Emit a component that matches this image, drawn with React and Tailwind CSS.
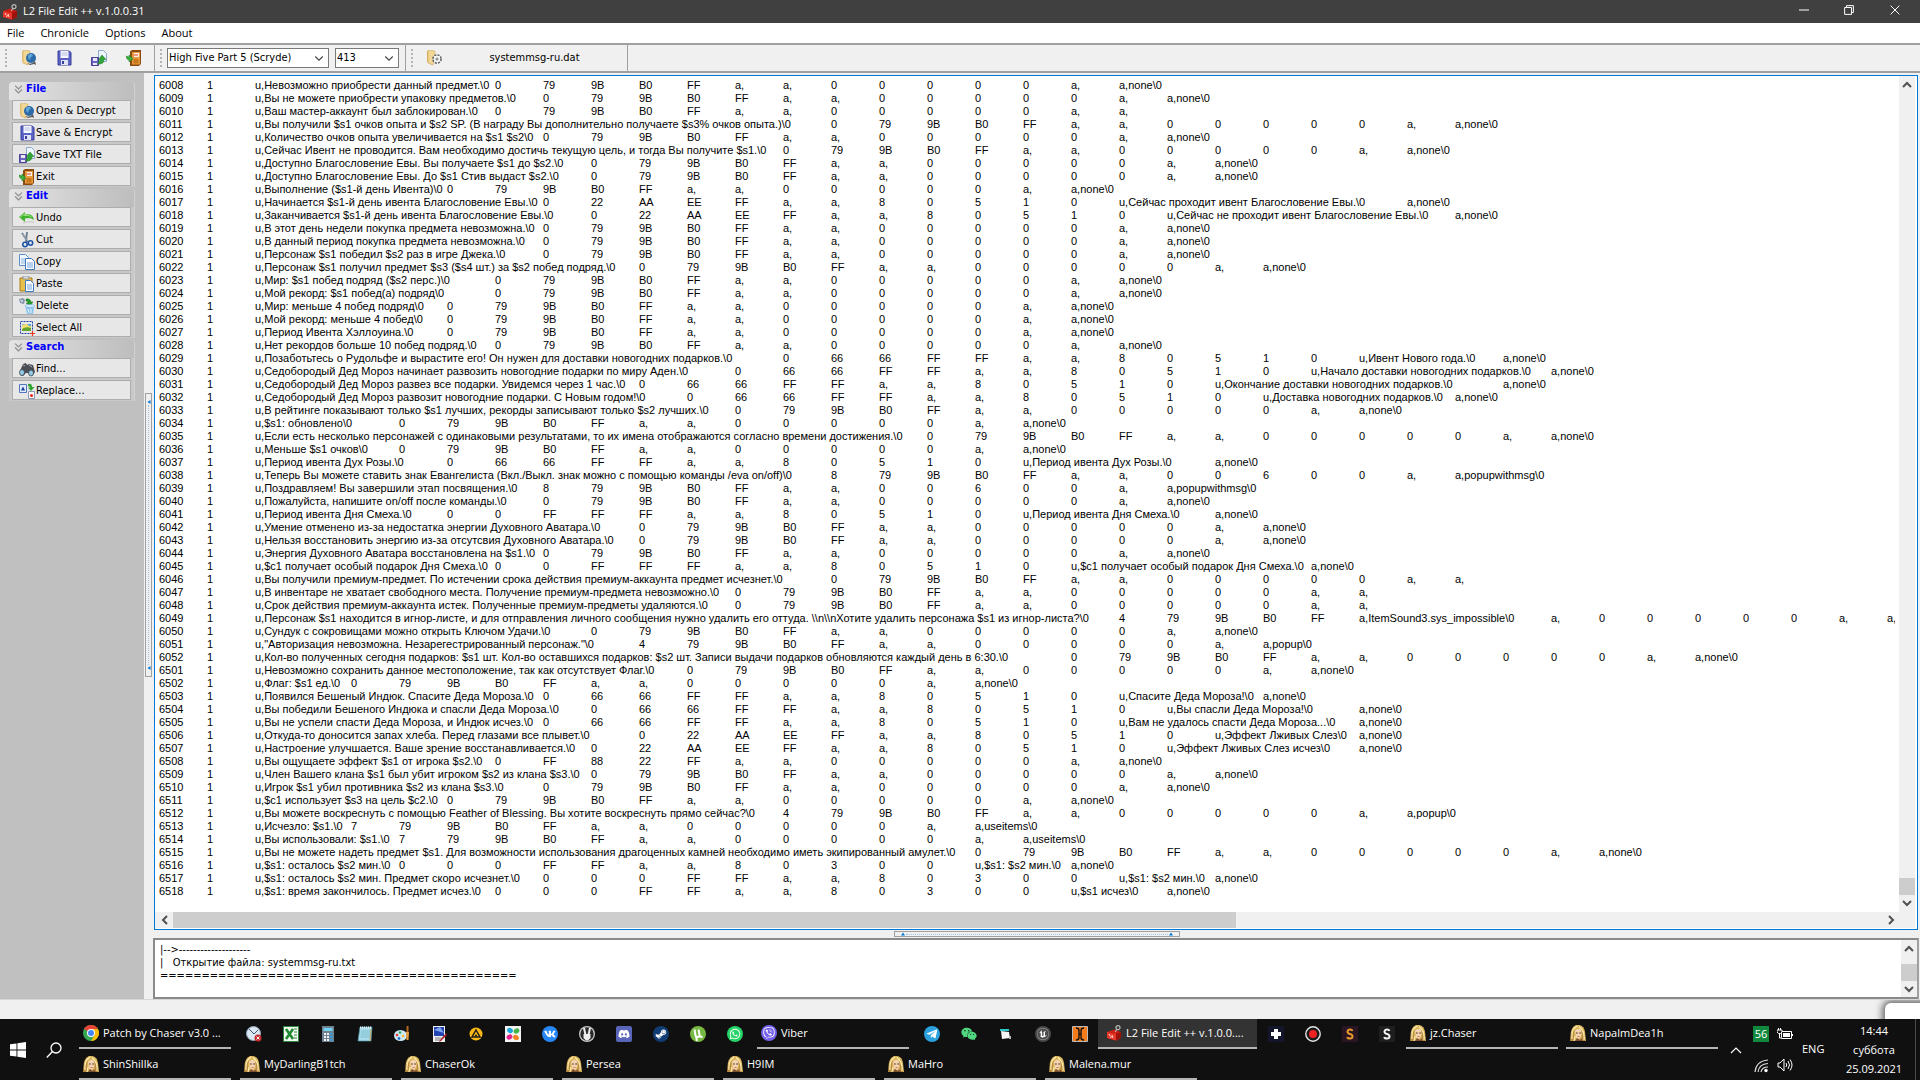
import { useMemo } from 'react'
import { FaDiscord, FaSteamSymbol, FaTelegramPlane, FaViber, FaVk, FaWeixin, FaWhatsapp } from 'react-icons/fa'
import { SiUnrealengine } from 'react-icons/si'
import clsx from 'clsx'

const TAB = 48
const EDITOR_FONT = '11px "Liberation Sans"'

// Common tail of a system message: colour, sounds and window flags
const D = '79|9B|B0|FF|a,|a,|0|0|0|0|0|a,'

/** Fields are split by "|"; a leading "^n:" pins a field to the n-th tab stop */
const ROWS = String.raw`
6008|1|u,Невозможно приобрести данный предмет.\0|^7:0|${D}|a,none\0
6009|1|u,Вы не можете приобрести упаковку предметов.\0|^8:0|${D}|a,none\0
6010|1|u,Ваш мастер-аккаунт был заблокирован.\0|^7:0|${D}|a,
6011|1|u,Вы получили $s1 очков опыта и $s2 SP. (В награду Вы дополнительно получаете $s3% очков опыта.)\0|^14:0|${D}|a,none\0
6012|1|u,Количество очков опыта увеличивается на $s1 $s2\0|^8:0|${D}|a,none\0
6013|1|u,Сейчас Ивент не проводится. Вам необходимо достичь текущую цель, и тогда Вы получите $s1.\0|^13:0|${D}|a,none\0
6014|1|u,Доступно Благословение Евы. Вы получаете $s1 до $s2.\0|^9:0|${D}|a,none\0
6015|1|u,Доступно Благословение Евы. До $s1 Стив выдаст $s2.\0|^9:0|${D}|a,none\0
6016|1|u,Выполнение ($s1-й день Ивента)\0|^6:0|${D}|a,none\0
6017|1|u,Начинается $s1-й день ивента Благословение Евы.\0|^8:0|22|AA|EE|FF|a,|a,|8|0|5|1|0|u,Сейчас проходит ивент Благословение Евы.\0|^26:a,none\0
6018|1|u,Заканчивается $s1-й день ивента Благословение Евы.\0|^9:0|22|AA|EE|FF|a,|a,|8|0|5|1|0|u,Сейчас не проходит ивент Благословение Евы.\0|^27:a,none\0
6019|1|u,В этот день недели покупка предмета невозможна.\0|^8:0|${D}|a,none\0
6020|1|u,В данный период покупка предмета невозможна.\0|^8:0|${D}|a,none\0
6021|1|u,Персонаж $s1 победил $s2 раз в игре Джека.\0|^8:0|${D}|a,none\0
6022|1|u,Персонаж $s1 получил предмет $s3 ($s4 шт.) за $s2 побед подряд.\0|^10:0|${D}|a,none\0
6023|1|u,Мир: $s1 побед подряд ($s2 перс.)\0|^7:0|${D}|a,none\0
6024|1|u,Мой рекорд: $s1 побед(а) подряд\0|^7:0|${D}|a,none\0
6025|1|u,Мир: меньше 4 побед подряд\0|^6:0|${D}|a,none\0
6026|1|u,Мой рекорд: меньше 4 побед\0|^6:0|${D}|a,none\0
6027|1|u,Период Ивента Хэллоуина.\0|^6:0|${D}|a,none\0
6028|1|u,Нет рекордов больше 10 побед подряд.\0|^7:0|${D}|a,none\0
6029|1|u,Позаботьтесь о Рудольфе и вырастите его! Он нужен для доставки новогодних подарков.\0|^13:0|66|66|FF|FF|a,|a,|8|0|5|1|0|u,Ивент Нового года.\0|^28:a,none\0
6030|1|u,Седобородый Дед Мороз начинает развозить новогодние подарки по миру Аден.\0|^12:0|66|66|FF|FF|a,|a,|8|0|5|1|0|u,Начало доставки новогодних подарков.\0|^29:a,none\0
6031|1|u,Седобородый Дед Мороз развез все подарки. Увидемся через 1 час.\0|^10:0|66|66|FF|FF|a,|a,|8|0|5|1|0|u,Окончание доставки новогодних подарков.\0|^28:a,none\0
6032|1|u,Седобородый Дед Мороз развозит новогодние подарки. С Новым годом!\0|^11:0|66|66|FF|FF|a,|a,|8|0|5|1|0|u,Доставка новогодних подарков.\0|^27:a,none\0
6033|1|u,В рейтинге показывают только $s1 лучших, рекорды записывают только $s2 лучших.\0|^12:0|${D}|a,none\0
6034|1|u,$s1: обновлено\0|^5:0|${D}|a,none\0
6035|1|u,Если есть несколько персонажей с одинаковыми результатами, то их имена отображаются согласно времени достижения.\0|^16:0|${D}|a,none\0
6036|1|u,Меньше $s1 очков\0|^5:0|${D}|a,none\0
6037|1|u,Период ивента Дух Розы.\0|^6:0|66|66|FF|FF|a,|a,|8|0|5|1|0|u,Период ивента Дух Розы.\0|^22:a,none\0
6038|1|u,Теперь Вы можете ставить знак Евангелиста (Вкл./Выкл. знак можно с помощью команды /eva on/off)\0|^14:8|79|9B|B0|FF|a,|a,|0|0|6|0|0|a,|a,popupwithmsg\0
6039|1|u,Поздравляем! Вы завершили этап посвящения.\0|^8:8|79|9B|B0|FF|a,|a,|0|0|6|0|0|a,|a,popupwithmsg\0
6040|1|u,Пожалуйста, напишите on/off после команды.\0|^8:0|${D}|a,none\0
6041|1|u,Период ивента Дня Смеха.\0|^6:0|0|FF|FF|FF|a,|a,|8|0|5|1|0|u,Период ивента Дня Смеха.\0|^22:a,none\0
6042|1|u,Умение отменено из-за недостатка энергии Духовного Аватара.\0|^10:0|${D}|a,none\0
6043|1|u,Нельзя восстановить энергию из-за отсутсвия Духовного Аватара.\0|^10:0|${D}|a,none\0
6044|1|u,Энергия Духовного Аватара восстановлена на $s1.\0|^8:0|${D}|a,none\0
6045|1|u,$c1 получает особый подарок Дня Смеха.\0|^7:0|0|FF|FF|FF|a,|a,|8|0|5|1|0|u,$c1 получает особый подарок Дня Смеха.\0|^24:a,none\0
6046|1|u,Вы получили премиум-предмет. По истечении срока действия премиум-аккаунта предмет исчезнет.\0|^14:0|${D}|a,
6047|1|u,В инвентаре не хватает свободного места. Получение премиум-предмета невозможно.\0|^12:0|${D}|a,
6048|1|u,Срок действия премиум-аккаунта истек. Полученные премиум-предметы удаляются.\0|^12:0|${D}|a,
6049|1|u,Персонаж $s1 находится в игнор-листе, и для отправления личного сообщения нужно удалить его оттуда. \\n\\nХотите удалить персонажа $s1 из игнор-листа?\0|^20:4|79|9B|B0|FF|a,ItemSound3.sys_impossible\0|^29:a,|0|0|0|0|0|a,|a,none\0
6050|1|u,Сундук с сокровищами можно открыть Ключом Удачи.\0|^9:0|${D}|a,none\0
6051|1|u,"Авторизация невозможна. Незарегестрированный персонаж."\0|^10:4|${D}|a,popup\0
6052|1|u,Кол-во полученных сегодня подарков: $s1 шт. Кол-во оставшихся подарков: $s2 шт. Записи выдачи подарков обновляются каждый день в 6:30.\0|^19:0|${D}|a,none\0
6501|1|u,Невозможно сохранить данное местоположение, так как отсутствует Флаг.\0|^11:0|${D}|a,none\0
6502|1|u,Флаг: $s1 ед.\0|^4:0|${D}|a,none\0
6503|1|u,Появился Бешеный Индюк. Спасите Деда Мороза.\0|^8:0|66|66|FF|FF|a,|a,|8|0|5|1|0|u,Спасите Деда Мороза!\0|^23:a,none\0
6504|1|u,Вы победили Бешеного Индюка и спасли Деда Мороза.\0|^9:0|66|66|FF|FF|a,|a,|8|0|5|1|0|u,Вы спасли Деда Мороза!\0|^25:a,none\0
6505|1|u,Вы не успели спасти Деда Мороза, и Индюк исчез.\0|^8:0|66|66|FF|FF|a,|a,|8|0|5|1|0|u,Вам не удалось спасти Деда Мороза...\0|^25:a,none\0
6506|1|u,Откуда-то доносится запах хлеба. Перед глазами все плывет.\0|^10:0|22|AA|EE|FF|a,|a,|8|0|5|1|0|u,Эффект Лживых Слез\0|^25:a,none\0
6507|1|u,Настроение улучшается. Ваше зрение восстанавливается.\0|^9:0|22|AA|EE|FF|a,|a,|8|0|5|1|0|u,Эффект Лживых Слез исчез\0|^25:a,none\0
6508|1|u,Вы ощущаете эффект $s1 от игрока $s2.\0|^7:0|FF|88|22|FF|a,|a,|0|0|0|0|0|a,|a,none\0
6509|1|u,Член Вашего клана $s1 был убит игроком $s2 из клана $s3.\0|^9:0|${D}|a,none\0
6510|1|u,Игрок $s1 убил противника $s2 из клана $s3.\0|^8:0|${D}|a,none\0
6511|1|u,$c1 использует $s3 на цель $c2.\0|^6:0|${D}|a,none\0
6512|1|u,Вы можете воскреснуть с помощью Feather of Blessing. Вы хотите воскреснуть прямо сейчас?\0|^13:4|${D}|a,popup\0
6513|1|u,Исчезло: $s1.\0|^4:7|${D}|a,useitems\0
6514|1|u,Вы использовали: $s1.\0|^5:7|${D}|a,useitems\0
6515|1|u,Вы не можете надеть предмет $s1. Для возможности использования драгоценных камней необходимо иметь экипированный амулет.\0|^17:0|${D}|a,none\0
6516|1|u,$s1: осталось $s2 мин.\0|^5:0|0|0|FF|FF|a,|a,|8|0|3|0|0|u,$s1: $s2 мин.\0|^19:a,none\0
6517|1|u,$s1: осталось $s2 мин. Предмет скоро исчезнет.\0|^8:0|0|0|FF|FF|a,|a,|8|0|3|0|0|u,$s1: $s2 мин.\0|^22:a,none\0
6518|1|u,$s1: время закончилось. Предмет исчез.\0|^7:0|0|0|FF|FF|a,|a,|8|0|3|0|0|u,$s1 исчез\0|^21:a,none\0
`

const LOG = ['|-->--------------------', '|   Открытие файла: systemmsg-ru.txt', '='.repeat(43)].join('\n')

/** Joins the fields with as many tabs as each one needs to reach its tab stop */
function layoutLine(line, measure) {
  // the browser skips a stop that is closer than half a space
  const minTab = measure(' ') / 2
  let out = ''
  let col = 0
  let end = 0
  line.split('|').forEach((raw, i) => {
    const pin = raw.match(/^\^(\d+):/)
    const text = pin ? raw.slice(pin[0].length) : raw
    if (i > 0) {
      const next = Math.floor((end + minTab) / TAB) + 1
      const target = pin ? Math.max(Number(pin[1]), next) : next
      out += '\t'.repeat(target - next + 1)
      col = target
    }
    out += text
    end = col * TAB + measure(text)
  })
  return out
}

/* ---------- icons ---------- */

function Svg({ className = 'size-4', children, ...rest }) {
  return (
    <svg viewBox="0 0 16 16" className={clsx('shrink-0', className)} aria-hidden="true" {...rest}>
      {children}
    </svg>
  )
}

const OpenIcon = () => (
  <Svg>
    <path d="M1 1l6 1v13l-5-2-1-2z" fill="#e8c77c" />
    <path d="M2 0l7 1v3L7 15 2 13z" fill="#f2d896" stroke="#c79b4e" strokeWidth=".5" />
    <circle cx="10" cy="8" r="5" fill="#2a6aa8" />
    <path d="M7 5q2-2 4-1l1 2-2 1-1 3-2-2z" fill="#5fa4d4" />
    <path d="M6 13q5 2 8-2l1 4-2-1-4 1z" fill="#555" />
  </Svg>
)

const SaveIcon = () => (
  <Svg>
    <path d="M2 1h11l2 1.500V15H2z" fill="#5a62c4" stroke="#393f9c" />
    <path d="M4.500 1h8v7h-8z" fill="#f6f8ff" />
    <path d="M5.500 3h6M5.500 5h6" stroke="#b5bce0" />
    <path d="M5 10h7v5H5z" fill="#dfe3f5" />
    <path d="M6 11h2v3H6z" fill="#393f9c" />
  </Svg>
)

const SaveTxtIcon = () => (
  <Svg>
    <path d="M7.500.5h5l3 3v8h-8z" fill="#eef5fd" stroke="#8aa9cf" />
    <path d="M.5 7.500h7v8h-7z" fill="#6a63c0" stroke="#4a4398" />
    <path d="M2 8h4v3H2zM2 13h4v2H2z" fill="#e9e9fa" />
    <path d="M7 12.500q1.500 0 2-3H7.500L11 5l4 4.500h-2q0 5-6 4.500z" fill="#2fa636" stroke="#17701d" strokeWidth=".5" />
  </Svg>
)

const ExitIcon = () => (
  <Svg>
    <path d="M4 1.500L6 0h9v14l-2 2H4z" fill="#8a4a12" />
    <path d="M6 2h8v12.500H6z" fill="#e59a3c" />
    <path d="M8 3h5v4H8z" fill="#fff0e8" />
    <path d="M9 4v2M11 4v2" stroke="#e03c28" />
    <path d="M7.500 9h5v4.500h-5z" fill="#c9771f" />
    <path d="M0 6l3 1V5l4 4-4 3v-2L1 9z" fill="#3cae3c" stroke="#1c7a22" strokeWidth=".5" />
  </Svg>
)

const UndoIcon = () => (
  <Svg>
    <path d="M0 7l6-5v2.500q8-1.500 9 5.500-4-3-9-1.500V12z" fill="#3fb22e" />
    <path d="M1.500 7l4-3v1.500q5-1 7 1.500" stroke="#9be37f" fill="none" />
    <path d="M4 13q6-2 11-.5" stroke="#cfcfcf" strokeWidth="1.500" fill="none" />
  </Svg>
)

const CutIcon = () => (
  <Svg>
    <path d="M3 1l6 9M8 0L7 10" stroke="#6b7b8c" strokeWidth="1.800" />
    <path d="M3.500 2L9 9" stroke="#cdd8e2" strokeWidth=".6" />
    <circle cx="6" cy="12.500" r="2.200" fill="none" stroke="#1f54a8" strokeWidth="1.600" />
    <circle cx="11.500" cy="11" r="2.200" fill="none" stroke="#1f54a8" strokeWidth="1.600" />
  </Svg>
)

const CopyIcon = () => (
  <Svg>
    <path d="M.5.5h6l3 3v8h-9z" fill="#f2f7fd" stroke="#5d8fc9" />
    <path d="M2 5h5M2 7h5M2 9h5" stroke="#8db4df" />
    <path d="M6.500 4.500h6l3 3v8h-9z" fill="#fff" stroke="#3f78bd" />
    <path d="M8 9h6M8 11h6M8 13h6" stroke="#6fa2db" />
  </Svg>
)

const PasteIcon = () => (
  <Svg>
    <path d="M1 2h12v13H1z" fill="#e8c04e" stroke="#a77c1a" />
    <path d="M4 0h6v3H4z" fill="#d7dbe0" stroke="#7e858d" strokeWidth=".7" />
    <path d="M6.500 4.500h5l3 3v8h-8z" fill="#fff" stroke="#3f78bd" />
    <path d="M8 9h5M8 11h5M8 13h5" stroke="#6fa2db" />
  </Svg>
)

const DeleteIcon = () => (
  <Svg>
    <path d="M0 1l4-1 2 2-1 4-4-1z" fill="#8593ab" />
    <path d="M1 2l3 1-2 1" stroke="#d4dce8" fill="none" />
    <path d="M7 1q4-1 5 3h2l-3 4-4-3h2Q9 3 7 3z" fill="#249a2a" stroke="#12651a" strokeWidth=".4" />
    <path d="M6 7.500h9.500L14 16H8z" fill="#8ec6f0" />
    <ellipse cx="10.800" cy="8" rx="4.800" ry="1.500" fill="#d6ecfb" stroke="#6ba9dc" strokeWidth=".6" />
    <path d="M9 11l1 4M12 11v4" stroke="#fff" strokeWidth=".8" />
  </Svg>
)

const SelectAllIcon = () => (
  <Svg>
    <path d="M1.500 1.500h12v12h-12z" fill="none" stroke="#1d3fa6" strokeDasharray="2 1" />
    <path d="M3 4h9v7H3z" fill="#57a8e4" />
    <path d="M3 8q4-3 9-1v4H3z" fill="#62a62e" />
    <path d="M3 5q5-2 6 0t3 1v2q-5-2-9 1z" fill="#f2df70" />
    <path d="M11 13.500h5M13.500 11v5" stroke="#f0361c" strokeWidth="1.200" />
  </Svg>
)

const FindIcon = () => (
  <Svg>
    <path d="M1 10L4 3l3-1 1 2 2-1 4 1 2 7-3 4-3-3H7l-3 3-3-1z" fill="#4b4f55" />
    <path d="M4 4l2 1M10 4l3 2" stroke="#aab0b8" />
    <ellipse cx="3" cy="11.500" rx="2.500" ry="3" fill="#8fcbe8" stroke="#333" strokeWidth=".7" />
    <ellipse cx="12" cy="12" rx="2.500" ry="3" fill="#8fcbe8" stroke="#333" strokeWidth=".7" />
  </Svg>
)

const ReplaceIcon = () => (
  <Svg>
    <path d="M.5 1.500h7v8h-7z" fill="#dfeafb" stroke="#5476c0" />
    <path d="M2 7.500l2-4 2 4z" fill="#1b3c9e" />
    <path d="M9 1q4-1 4 3h2.500L12 8 9 4.500h2Q11 3 9 3z" fill="#2ca52f" />
    <path d="M9.500 8.500h6v7h-6z" fill="#fff" stroke="#8a97b8" />
    <circle cx="12.500" cy="12.500" r="1.600" fill="#e22d1c" />
  </Svg>
)

const GearFolderIcon = () => (
  <Svg>
    <path d="M1 1l6 1v13l-5-2-1-2z" fill="#d9b25f" />
    <path d="M2 0l7 1v3L7 15 2 13z" fill="#f2d896" stroke="#c79b4e" strokeWidth=".5" />
    <circle cx="11" cy="9" r="4" fill="#f2f2f2" stroke="#666" strokeDasharray="2 1.140" strokeWidth="1.800" />
    <circle cx="11" cy="9" r="3.200" fill="#f5f5f5" />
    <circle cx="11" cy="9" r="1.500" fill="#8f8f8f" />
  </Svg>
)

const AppIcon = () => (
  <Svg>
    <path d="M1 7l7-2.500L15 7v6l-5 2.500L1 13z" fill="#c81e14" />
    <path d="M1 7l9 2v6.500L1 13z" fill="#e6382a" />
    <path d="M10 9l5-2v6l-5 2.500z" fill="#9c120c" />
    <path d="M3 9l1 2M6 10l1 3M4 12.500l2-1" stroke="#ffd5cc" />
    <circle cx="12" cy="2.700" r="2" fill="none" stroke="#b9b9b9" strokeWidth="1.200" />
    <path d="M11 4.500L9 7" stroke="#b9b9b9" strokeWidth="1.200" />
  </Svg>
)

const Portrait = () => (
  <Svg>
    <path d="M1 16Q-1 3 6 0q8-1 9 7l1 9z" fill="#dcb55c" />
    <path d="M0 16Q1 6 5 3l-1 6 1 7zM11 3q4 3 4 13h-3z" fill="#b98a3c" />
    <path d="M5 6q3-4 6-1l.5 5-2.500 4-3-1.500z" fill="#f3d3b0" />
    <path d="M2 14Q1 5 7 1M14 15Q15 6 9 1.500M4 16l1-5" stroke="#fff0b4" fill="none" strokeWidth="1.200" />
    <path d="M6 8h1.800M9.200 8H11" stroke="#5c3a2c" strokeWidth="1.200" />
    <path d="M7.500 11.500h2" stroke="#b85f4c" strokeWidth=".8" />
    <path d="M5 16l2-3 3 2 1-2 2 3z" fill="#7d5234" />
  </Svg>
)

const ChromeIcon = () => (
  <Svg>
    <circle cx="8" cy="8" r="8" fill="#34a853" />
    <path d="M8 8L1.070 4A8 8 0 0 1 14.930 4z" fill="#ea4335" />
    <path d="M8 8V4h6.930A8 8 0 0 1 8 16l3.500-6z" fill="#fbbc05" />
    <circle cx="8" cy="8" r="4" fill="#fff" />
    <circle cx="8" cy="8" r="3" fill="#4285f4" />
  </Svg>
)

const ClockIcon = () => (
  <Svg>
    <circle cx="7.500" cy="7.500" r="7" fill="#dbe8f4" stroke="#8fa3b8" />
    <path d="M3 3l5 5 4-4" stroke="#44566b" fill="none" />
    <circle cx="12" cy="12" r="3.500" fill="#c62828" />
    <path d="M10.500 10.500l3 3M13.500 10.500l-3 3" stroke="#fff" />
  </Svg>
)

const ExcelIcon = () => (
  <Svg>
    <path d="M.5.5h15v15H.5z" fill="#f3f8f2" stroke="#2d8a3c" />
    <path d="M11 3h3M11 6h3M11 9h3M11 12h3" stroke="#2d8a3c" />
    <path d="M3 3l7 10M10 3L3 13" stroke="#1f8a30" strokeWidth="2.600" />
  </Svg>
)

const CalcIcon = () => (
  <Svg>
    <path d="M2 0h12v16H2z" fill="#70808f" />
    <path d="M3.500 2h9v3h-9z" fill="#6fd3f2" />
    <path d="M4 8h2M7 8h2M4 11h2M7 11h2M4 14h2M7 14h2" stroke="#f2f5f7" strokeWidth="2" />
    <path d="M10 8h2.500M10 11h2.500M10 14h2.500" stroke="#2f9fe0" strokeWidth="2" />
  </Svg>
)

const NotepadIcon = () => (
  <Svg>
    <path d="M3 1h12l-1 14H1z" fill="#a9dcea" stroke="#4c91a8" strokeWidth=".7" />
    <path d="M4 5h9M4 7h9M3.500 9H13M3.500 11H13" stroke="#6fb3c7" strokeWidth=".7" />
    <path d="M3 1.500h12" stroke="#e8eef0" strokeWidth="2" strokeDasharray="1 1" />
    <path d="M14 3l-1 12" stroke="#c9a45c" />
  </Svg>
)

const PaintIcon = () => (
  <Svg>
    <ellipse cx="6.500" cy="9.500" rx="6.500" ry="5.500" fill="#cfe6f5" />
    <circle cx="3" cy="9" r="1.300" fill="#e33" />
    <circle cx="6" cy="6.500" r="1.300" fill="#2a5" />
    <circle cx="5" cy="12.500" r="1.400" fill="#27c" />
    <circle cx="9" cy="10" r="1.300" fill="#fb3" />
    <path d="M13.500 0v6" stroke="#b5651d" strokeWidth="2" />
    <path d="M12 6h3l-.5 8h-2z" fill="#e79b3c" />
  </Svg>
)

const EditorIcon = () => (
  <Svg>
    <path d="M2 0h12v16H2z" fill="#f2f2f2" />
    <path d="M3 1h10v9H3z" fill="#2343b0" />
    <path d="M3 4l6-3 4 6" fill="#7fa6f5" />
    <path d="M4 12h6M4 14h5" stroke="#777" />
    <path d="M15 7l-6 7-1 2 2-1 6-6z" fill="#a81f28" />
  </Svg>
)

const YellowIcon = () => (
  <Svg>
    <circle cx="8" cy="8" r="6.500" fill="#f9b916" />
    <path d="M8 4l4 7H4z" fill="none" stroke="#1c1c1c" strokeWidth="1.500" />
    <path d="M8 8l1.500 2.500h-3z" fill="#1c1c1c" />
  </Svg>
)

const FlowerIcon = () => (
  <Svg>
    <path d="M0 0h16v16H0z" fill="#f4f4f4" />
    <ellipse cx="5" cy="4.500" rx="3" ry="2.500" fill="#18a6dd" transform="rotate(35 5 4.500)" />
    <ellipse cx="11.500" cy="5" rx="3" ry="2.500" fill="#44b649" transform="rotate(-35 11.500 5)" />
    <ellipse cx="4.500" cy="11" rx="3" ry="2.500" fill="#e5218a" transform="rotate(-35 4.500 11)" />
    <ellipse cx="11" cy="11.500" rx="3" ry="2.500" fill="#f58220" transform="rotate(35 11 11.500)" />
  </Svg>
)

const PeaceIcon = () => (
  <Svg>
    <circle cx="8" cy="8" r="8" fill="#c9c9c9" />
    <circle cx="8" cy="8" r="6.700" fill="#2b2b2b" />
    <path d="M5 2l1.500 7M11 2L9.500 9" stroke="#eee" strokeWidth="2" />
    <path d="M4.500 8h7v4L9 14.500H7L4.500 12z" fill="#eee" />
  </Svg>
)

const Round = ({ bg, fg = 'text-white', Glyph, square }) => (
  <span className={clsx('grid size-4 place-items-center', square ? 'rounded-xs' : 'rounded-full', bg, fg)}>
    <Glyph className="size-3" />
  </span>
)

const TorrentIcon = () => (
  <Svg>
    <circle cx="8" cy="8" r="8" fill="#77b843" />
    <path d="M4.500 3.500l1 6q.5 2 2.500 1.500t1.500-2.500l-1-5M9.500 9q1 2.500 3 1.500M6 10l1 5" stroke="#fff" strokeWidth="2" fill="none" />
  </Svg>
)

const VbIcon = () => (
  <Svg>
    <path d="M2 3h9v2H2z" fill="#27c9c9" />
    <path d="M3 5l8 1 1 6-8 1z" fill="#f6f6f6" />
    <path d="M11 10h2v3h-2z" fill="#bdbdbd" />
  </Svg>
)

const OrangeIcon = () => (
  <Svg>
    <path d="M.5.5h15v15H.5z" fill="#f27b1b" stroke="#b9b9b9" />
    <path d="M4 2q3 0 3 2.500v7Q7 14 4 14M12 2Q9 2 9 4.500v7q0 2.500 3 2.500M7 8h2" stroke="#17120d" strokeWidth="1.400" fill="none" />
  </Svg>
)

const CrossIcon = () => (
  <Svg>
    <path d="M0 0h16v16H0z" fill="#14162c" />
    <path d="M6 3h4v3h3v4h-3v3H6v-3H3V6h3z" fill="#fff" />
  </Svg>
)

const RecordIcon = () => (
  <Svg>
    <circle cx="8" cy="8" r="7.200" fill="#1a1a1a" stroke="#e6e6e6" strokeWidth="1.400" />
    <circle cx="8" cy="8" r="4" fill="#ee2222" />
  </Svg>
)

function CoinIcon({ dark }) {
  return (
    <Svg>
      <path d="M0 0h16v16H0z" fill={dark ? '#1e1e1e' : '#2a1622'} />
      <path
        d="M10.500 5Q10 3.500 8 3.500T5.500 5.500Q5.500 7.500 8 8t2.500 2.500q0 2-2.500 2T5.300 11"
        stroke={dark ? '#f2f2f2' : '#e9982c'}
        strokeWidth="2"
        fill="none"
      />
    </Svg>
  )
}

/* ---------- small parts ---------- */

const ARROWS = {
  up: 'M4 10l4-4 4 4',
  down: 'M4 6l4 4 4-4',
  left: 'M10 4L6 8l4 4',
  right: 'M6 4l4 4-4 4',
}

function ScrollButton({ dir }) {
  return (
    <button type="button" aria-label={`Scroll ${dir}`} className="grid size-4 shrink-0 place-items-center">
      <Svg>
        <path d={ARROWS[dir]} fill="none" stroke="#505050" strokeWidth="2" />
      </Svg>
    </button>
  )
}

const Grip = () => (
  <span className="flex flex-col gap-[2px] px-[5px]" aria-hidden="true">
    {[0, 1, 2, 3, 4].map((i) => (
      <span key={i} className="size-[2px] bg-[#b4b4b4]" />
    ))}
  </span>
)

function Combo({ label, value, className }) {
  return (
    <div className={clsx('relative', className)}>
      <select
        aria-label={label}
        defaultValue={value}
        className="block h-5 w-full appearance-none border border-[#7a7a7a] bg-white pl-px text-[11px] outline-none"
      >
        <option>{value}</option>
      </select>
      <Svg className="pointer-events-none absolute top-1 right-1 size-3">
        <path d="M3 6l5 5 5-5" fill="none" stroke="#444" strokeWidth="1.500" />
      </Svg>
    </div>
  )
}

const GROUPS = [
  {
    title: 'File',
    items: [
      ['Open & Decrypt', OpenIcon],
      ['Save & Encrypt', SaveIcon],
      ['Save TXT File', SaveTxtIcon],
      ['Exit', ExitIcon],
    ],
  },
  {
    title: 'Edit',
    items: [
      ['Undo', UndoIcon],
      ['Cut', CutIcon],
      ['Copy', CopyIcon],
      ['Paste', PasteIcon],
      ['Delete', DeleteIcon],
      ['Select All', SelectAllIcon],
    ],
  },
  {
    title: 'Search',
    items: [
      ['Find...', FindIcon],
      ['Replace...', ReplaceIcon],
    ],
  },
]

function Sidebar() {
  return (
    <aside className="flex w-36 shrink-0 flex-col gap-[2px] bg-[#c0c0c0] px-[9px] pt-[9px]">
      {GROUPS.map((g) => (
        <section key={g.title} className="rounded-t-sm border-r border-[#d2d2d2] bg-[#c8c8c8] pb-px">
          <h2 className="flex h-[18px] items-center gap-[3px] rounded-t-sm bg-linear-to-r from-[#e4e4e4] to-[#bdbdbd] pb-[3px] pl-[5px] text-[11px] font-bold text-[#0000ff]">
            <Svg className="size-[9px]">
              <path d="M2 1l6 6 6-6M2 8l6 6 6-6" fill="none" stroke="#8c8c8c" strokeWidth="2" />
            </Svg>
            {g.title}
          </h2>
          <div className="flex flex-col gap-[2px] px-[3px]">
            {g.items.map(([label, Icon]) => (
              <button
                key={label}
                type="button"
                className="flex h-5 items-center gap-px border border-[#adadad] bg-[#e7e7e7] pt-[2px] pl-[6px] text-[11px] whitespace-nowrap"
              >
                <Icon />
                {label}
              </button>
            ))}
          </div>
        </section>
      ))}
    </aside>
  )
}

function Editor() {
  const text = useMemo(() => {
    const ctx = document.createElement('canvas').getContext('2d')
    ctx.font = EDITOR_FONT
    const measure = (s) => ctx.measureText(s).width
    return ROWS.trim()
      .split('\n')
      .map((line) => layoutLine(line, measure))
      .join('\n')
  }, [])

  return (
    <div className="mt-[2px] mr-[2px] ml-px flex min-h-0 flex-1 flex-col border border-[#0078d7] bg-white pr-[2px] pb-px">
      <div className="flex min-h-0 flex-1">
        <textarea
          aria-label="systemmsg-ru.dat"
          readOnly
          wrap="off"
          spellCheck={false}
          value={text}
          className="mr-1 min-w-0 flex-1 resize-none overflow-hidden pt-[3px] pl-1 font-['Liberation_Sans',sans-serif] text-[11px] leading-[13px] whitespace-pre outline-none [tab-size:48px]"
        />
        <div className="flex w-4 shrink-0 flex-col bg-[#f0f0f0] py-px">
          <ScrollButton dir="up" />
          <div className="flex-1" />
          <div className="h-[17px] bg-[#cdcdcd]" />
          <ScrollButton dir="down" />
        </div>
      </div>
      <div className="flex h-4 shrink-0 bg-[#f0f0f0] pr-4 pl-[2px]">
        <ScrollButton dir="left" />
        <div className="w-[61%] bg-[#cdcdcd]" />
        <div className="flex-1" />
        <ScrollButton dir="right" />
      </div>
    </div>
  )
}

function Log() {
  return (
    <div className="mr-px flex h-[61px] shrink-0 border-2 border-[#8a8a8a] border-r-[#a0a0a0] bg-white">
      <textarea
        aria-label="Log"
        readOnly
        value={LOG}
        className="min-w-0 flex-1 resize-none overflow-hidden pt-[3px] pl-[5px] text-[11px] leading-[13px] whitespace-pre outline-none"
      />
      <div className="flex w-4 shrink-0 flex-col bg-[#f0f0f0] pt-px">
        <ScrollButton dir="up" />
        <div className="flex-1" />
        <div className="h-[17px] bg-[#cdcdcd]" />
        <ScrollButton dir="down" />
      </div>
    </div>
  )
}

function TaskButton({ icon, label, active, className }) {
  return (
    <button
      type="button"
      className={clsx(
        'flex shrink-0 items-center gap-1 border-b-2 border-[#b5b5b5] pl-1 text-left whitespace-nowrap text-white',
        active && 'bg-[#333]',
        className
      )}
    >
      {icon}
      {label}
    </button>
  )
}

function Pins({ items }) {
  return items.map(([name, icon]) => (
    <button key={name} type="button" aria-label={name} className="grid w-[37px] shrink-0 place-items-center">
      {icon}
    </button>
  ))
}

const PINS_A = [
  ['Clock', <ClockIcon />],
  ['Excel', <ExcelIcon />],
  ['Calculator', <CalcIcon />],
  ['Notepad', <NotepadIcon />],
  ['Paint', <PaintIcon />],
  ['Editor', <EditorIcon />],
  ['AIMP', <YellowIcon />],
  ['Flower', <FlowerIcon />],
  ['VK', <Round bg="bg-[#2787f5]" Glyph={FaVk} />],
  ['Peace', <PeaceIcon />],
  ['Discord', <Round bg="bg-[#5865b8]" Glyph={FaDiscord} square />],
  ['Steam', <Round bg="bg-[#123d74]" Glyph={FaSteamSymbol} />],
  ['Torrent', <TorrentIcon />],
  ['WhatsApp', <Round bg="bg-[#25d366]" Glyph={FaWhatsapp} />],
]

const PINS_B = [
  ['Telegram', <Round bg="bg-[#2aa1de]" Glyph={FaTelegramPlane} />],
  ['WeChat', <FaWeixin className="size-4 text-[#4fd67f]" />],
  ['Basic', <VbIcon />],
  ['Unreal', <Round bg="bg-[#4a4a4a]" Glyph={SiUnrealengine} />],
  ['Hex', <OrangeIcon />],
]

const PINS_C = [
  ['Cross', <CrossIcon />],
  ['Record', <RecordIcon />],
  ['Coin', <CoinIcon />],
  ['Coin dark', <CoinIcon dark />],
]

const CLIENTS = ['ShinShillka', 'MyDarlingB1tch', 'ChaserOk', 'Persea', 'H9IM', 'MaHro', 'Malena.mur']

function Taskbar() {
  return (
    <footer className="flex h-[61px] shrink-0 bg-[#101010] text-[11px] text-white">
      <button type="button" aria-label="Start" className="grid w-9 place-items-center">
        <Svg>
          <path d="M0 2.300L6.500 1.400V7.600H0zM7.400 1.200L16 0v7.600H7.400zM0 8.400h6.500v6.200L0 13.700zM7.400 8.400H16V16l-8.600-1.200z" fill="#fff" />
        </Svg>
      </button>
      <button type="button" aria-label="Search" className="mr-[7px] grid w-9 place-items-center">
        <Svg>
          <circle cx="10" cy="6" r="5" fill="none" stroke="#fff" strokeWidth="1.300" />
          <path d="M6.500 9.500L.8 15.500" stroke="#fff" strokeWidth="1.300" />
        </Svg>
      </button>
      <div className="flex min-w-0 flex-1 flex-col gap-px">
        <nav className="flex h-[30px] shrink-0">
          <TaskButton icon={<ChromeIcon />} label="Patch by Chaser v3.0 ..." className="mr-1 w-[152px]" />
          <Pins items={PINS_A} />
          <TaskButton icon={<Round bg="bg-[#7360e8]" Glyph={FaViber} />} label="Viber" className="mx-1 w-[152px]" />
          <Pins items={PINS_B} />
          <TaskButton icon={<AppIcon />} label="L2 File Edit ++ v.1.0.0...." active className="w-[159px] pl-2" />
          <Pins items={PINS_C} />
          <TaskButton icon={<Portrait />} label="jz.Chaser" className="mr-2 ml-px w-[152px]" />
          <TaskButton icon={<Portrait />} label="NapalmDea1h" className="w-[152px]" />
        </nav>
        <nav className="flex h-[30px] shrink-0 gap-[9px]">
          {CLIENTS.map((name) => (
            <TaskButton key={name} icon={<Portrait />} label={name} className="w-[152px]" />
          ))}
        </nav>
      </div>
      <div className="flex shrink-0 items-center">
        <button type="button" aria-label="Hidden icons" className="mr-[9px]">
          <Svg>
            <path d="M3 11l5-5 5 5" fill="none" stroke="#fff" strokeWidth="1.200" />
          </Svg>
        </button>
        <div className="grid grid-cols-2 gap-x-2 gap-y-[15px]">
          <span className="grid size-4 place-items-center bg-[#10893e]">56</span>
          <Svg>
            <path d="M4.500 5.500h10v7h-10z" fill="none" stroke="#fff" />
            <path d="M6 7h7v4H6zM15 8h1v2h-1z" fill="#fff" />
            <path d="M0 4h5v2L3.500 7.500h-2L0 6zM1.500 2v2M3.500 2v2M2.500 7v5h2" fill="#101010" stroke="#fff" />
          </Svg>
          <Svg>
            <path d="M2 15Q3 4 15 3M5 15Q6 7 15 6.500M8 15q1-5 7-5" fill="none" stroke="#ddd" strokeWidth="1.200" />
            <circle cx="13" cy="13.500" r="1.700" fill="#fff" />
          </Svg>
          <Svg>
            <path d="M1 6h2l4-4v12l-4-4H1z" fill="none" stroke="#fff" />
            <path d="M9 6q1.500 2 0 4M11 4q3 4 0 8M13 2.500q4 5.500 0 11" fill="none" stroke="#fff" />
          </Svg>
        </div>
        <span className="ml-[9px] w-[36px]">ENG</span>
        <div className="w-[72px] text-center leading-[19px]">
          <div>14:44</div>
          <div>суббота</div>
          <div>25.09.2021</div>
        </div>
        <div className="ml-[5px] h-full w-[5px] border-l border-[#4a4a4a]" />
      </div>
    </footer>
  )
}

export default function App() {
  return (
    <div className="flex h-screen flex-col overflow-hidden bg-[#f0f0f0] font-['Open_Sans','Noto_Sans',sans-serif] text-black">
      <header className="flex h-[23px] shrink-0 items-center bg-[#404040] pl-[2px] text-[11px] text-white">
        <AppIcon />
        <h1 className="ml-[5px] flex-1">L2 File Edit ++ v.1.0.0.31</h1>
        <button type="button" aria-label="Minimize" className="grid h-full w-[45px] place-items-center pb-1">
          <Svg className="size-[10px]">
            <path d="M0 8h16" stroke="#fff" strokeWidth="1.600" />
          </Svg>
        </button>
        <button type="button" aria-label="Restore" className="grid h-full w-[46px] place-items-center pb-1">
          <Svg className="size-[10px]">
            <path d="M1 4h11v11H1zM4 4V1h11v11h-3" fill="none" stroke="#fff" strokeWidth="1.600" />
          </Svg>
        </button>
        <button type="button" aria-label="Close" className="mr-[2px] grid h-full w-[46px] place-items-center pb-1">
          <Svg className="size-[10px]">
            <path d="M1 1l14 14M15 1L1 15" stroke="#fff" strokeWidth="1.600" />
          </Svg>
        </button>
      </header>

      <nav className="flex h-5 shrink-0 gap-[2px] bg-white text-[11px]">
        {['File', 'Chronicle', 'Options', 'About'].map((m) => (
          <button key={m} type="button" className="px-[7px]">
            {m}
          </button>
        ))}
      </nav>

      <div className="flex min-h-0 flex-1 flex-col font-['DejaVu_Sans_Condensed','Noto_Sans',sans-serif] text-[11px]">
        <div className="flex h-[30px] shrink-0 items-stretch border-y-2 border-[#a0a0a0]">
          <div className="flex w-[155px] items-center border-r border-[#a0a0a0]">
            <Grip />
            <div className="flex gap-[19px] pl-[9px]">
              {[
                ['Open', OpenIcon],
                ['Save', SaveIcon],
                ['Save TXT', SaveTxtIcon],
                ['Exit', ExitIcon],
              ].map(([name, Icon]) => (
                <button key={name} type="button" aria-label={name}>
                  <Icon />
                </button>
              ))}
            </div>
          </div>
          <div className="flex w-[251px] items-center border-r border-[#a0a0a0]">
            <Grip />
            <Combo label="Game chronicle" value="High Five Part 5 (Scryde)" className="w-[162px]" />
            <Combo label="Version" value="413" className="ml-[6px] w-16" />
          </div>
          <div className="flex w-[222px] items-center border-r border-[#a0a0a0]">
            <Grip />
            <button type="button" aria-label="File settings" className="ml-2">
              <GearFolderIcon />
            </button>
            <span className="flex-1 text-center">systemmsg-ru.dat</span>
          </div>
        </div>

        <main className="flex min-h-0 flex-1">
          <Sidebar />
          <div className="flex w-[9px] shrink-0 items-center justify-center pb-[2px]" aria-hidden="true">
            <div className="flex h-[284px] w-[7px] flex-col items-center justify-between border border-[#a0a0a0] py-[5px]">
              <Svg className="h-[6px] w-1">
                <path d="M14 0v16L2 8z" fill="#0078d7" />
              </Svg>
              <div className="w-px flex-1 border-l border-dotted border-[#9cc4e8]" />
              <Svg className="h-[6px] w-1">
                <path d="M14 0v16L2 8z" fill="#0078d7" />
              </Svg>
            </div>
          </div>
          <div className="flex min-w-0 flex-1 flex-col">
            <Editor />
            <div className="flex h-2 shrink-0 items-center justify-center" aria-hidden="true">
              <div className="flex h-[6px] w-[286px] items-center justify-between border border-[#a0a0a0] px-[5px]">
                <Svg className="h-1 w-[6px]">
                  <path d="M0 14h16L8 2z" fill="#0078d7" />
                </Svg>
                <div className="h-px flex-1 border-t border-dotted border-[#9cc4e8]" />
                <Svg className="h-1 w-[6px]">
                  <path d="M0 14h16L8 2z" fill="#0078d7" />
                </Svg>
              </div>
            </div>
            <Log />
          </div>
        </main>

        <div className="relative h-5 shrink-0 overflow-hidden border-t border-[#d7d7d7]">
          <div className="absolute top-[3px] -right-2 h-8 w-[43px] rounded-md bg-white shadow-[0_0_7px_3px_rgba(0,0,0,0.55)]" />
        </div>
      </div>

      <Taskbar />
    </div>
  )
}
